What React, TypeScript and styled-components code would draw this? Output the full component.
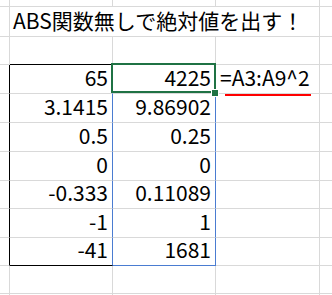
import React from "react";
import styled, { createGlobalStyle } from "styled-components";

const COL_WIDTHS = [10, 103, 103, 104];
const ROW_HEIGHTS = [7, 30, 28, 29, 29, 29, 29, 28, 29, 28, 28];

const GRID = "#d9d9d9";
const BORDER = "#000000";
const SPILL = "#4a7cd1";
const SELECT = "#1f7244";

const valuesA = ["65", "3.1415", "0.5", "0", "-0.333", "-1", "-41"];
const valuesB = ["4225", "9.86902", "0.25", "0", "0.11089", "1", "1681"];

const App: React.FC = () => {
  const last = valuesA.length - 1;

  return (
    <>
      <GlobalStyle />
      <Sheet>
        {/* partial top row */}
        <Cell />
        <Cell />
        <Cell />
        <Cell />
        <Cell $noRight />

        <Cell />
        <Title>ABS関数無しで絶対値を出す！</Title>
        <Cell $noRight />

        {/* empty row above the table, its bottom edge is the table top */}
        <Cell />
        <Cell $bottom={BORDER} />
        <Cell $bottom={SPILL} />
        <Cell />
        <Cell $noRight />

        {valuesA.map((a, i) => (
          <React.Fragment key={i}>
            <Cell $right={BORDER} />
            <Cell
              $align="right"
              $right={SPILL}
              $bottom={i === last ? BORDER : undefined}
            >
              {a}
            </Cell>
            <Cell
              $align="right"
              $right={SPILL}
              $bottom={i === last ? SPILL : undefined}
            >
              {valuesB[i]}
              {i === 0 && (
                <>
                  <Selection />
                  <FillHandle />
                </>
              )}
            </Cell>
            <Cell $align="left">
              {i === 0 && (
                <>
                  =A3:A9^2
                  <Underline />
                </>
              )}
            </Cell>
            <Cell $noRight />
          </React.Fragment>
        ))}

        <Cell />
        <Cell />
        <Cell />
        <Cell />
        <Cell $noRight />

        <Cell />
        <Cell />
        <Cell />
        <Cell />
        <Cell $noRight />
      </Sheet>
    </>
  );
};

export default App;

const GlobalStyle = createGlobalStyle`
  html, body {
    margin: 0;
    padding: 0;
    background: #ffffff;
    overflow: hidden;
  }
  body {
    font-family: "Noto Sans CJK JP", "Noto Sans", sans-serif;
    color: #000000;
  }
`;

const Sheet = styled.div`
  display: grid;
  grid-template-columns: ${COL_WIDTHS.map((w) => `${w}px`).join(" ")} 1fr;
  grid-template-rows: ${ROW_HEIGHTS.map((h) => `${h}px`).join(" ")} 1fr;
  width: 332px;
  height: 295px;
  overflow: hidden;
`;

const Cell = styled.div<{
  $align?: "left" | "right";
  $right?: string;
  $bottom?: string;
  $noRight?: boolean;
}>`
  position: relative;
  box-sizing: border-box;
  display: flex;
  align-items: flex-end;
  justify-content: ${(p) => (p.$align === "left" ? "flex-start" : "flex-end")};
  padding: 0 ${(p) => (p.$align === "left" ? "0" : "4px")} 5px
    ${(p) => (p.$align === "left" ? "4px" : "0")};
  border-right: ${(p) =>
    p.$noRight ? "none" : `1px solid ${p.$right ?? GRID}`};
  border-bottom: 1px solid ${(p) => p.$bottom ?? GRID};
  font-size: 21px;
  line-height: 21px;
  white-space: nowrap;
`;

const Title = styled(Cell)`
  grid-column: 2 / 5;
  justify-content: flex-start;
  padding-left: 3px;
`;

// active cell outline, drawn over the gridlines around it
const Selection = styled.div`
  position: absolute;
  left: -2px;
  top: -2px;
  right: -1px;
  bottom: 0;
  border: 2px solid ${SELECT};
  pointer-events: none;
`;

const FillHandle = styled.div`
  position: absolute;
  right: -4px;
  bottom: -4px;
  box-sizing: border-box;
  width: 8px;
  height: 8px;
  background: ${SELECT};
  border: 1px solid #ffffff;
  z-index: 2;
`;

// red line shape drawn under the formula
const Underline = styled.div`
  position: absolute;
  left: 9px;
  bottom: -3px;
  width: 86px;
  height: 2px;
  background: #ff0000;
  z-index: 1;
`;
